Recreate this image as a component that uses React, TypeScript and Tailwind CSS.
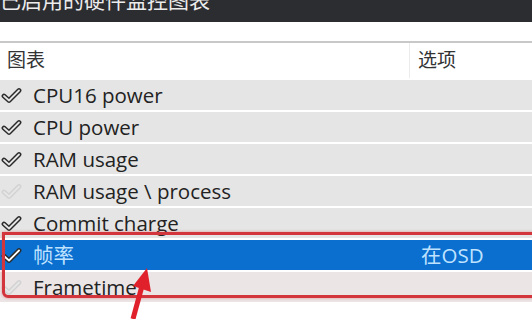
const font = { fontFamily: '"Open Sans", "Noto Sans", "Noto Sans CJK SC", sans-serif' };

type Row = { name: string; option?: string; state: 'on' | 'off'; selected?: boolean };

const rows: Row[] = [
  { name: 'CPU16 power', state: 'on' },
  { name: 'CPU power', state: 'on' },
  { name: 'RAM usage', state: 'on' },
  { name: 'RAM usage \\ process', state: 'off' },
  { name: 'Commit charge', state: 'on' },
  { name: '帧率', option: '在OSD', state: 'on', selected: true },
  { name: 'Frametime', state: 'off' },
];

function Check({ state, selected }: { state: 'on' | 'off'; selected?: boolean }) {
  const outer = state === 'off' ? '#d2d2d2' : '#2a2a2a';
  const inner = selected ? '#ffffff' : state === 'off' ? '#e6e6e6' : '#e4e4e4';
  return (
    <svg width="21" height="17" viewBox="0 0 21 17" className="shrink-0">
      <path d="M3 9 L8 13.5 L18 3.5" fill="none" stroke={outer} strokeWidth="4.8" strokeLinecap="round" strokeLinejoin="round" />
      <path d="M3 9 L8 13.5 L18 3.5" fill="none" stroke={inner} strokeWidth="1.8" strokeLinecap="round" strokeLinejoin="round" />
    </svg>
  );
}

export default function App() {
  return (
    <div className="relative w-[532px] h-[319px] overflow-hidden bg-white" style={font}>
      {/* title bar, cut at top */}
      <div className="h-[22px] bg-[#2c2d31] overflow-hidden">
        <div className="-mt-[12px] text-[21px] leading-[24px] text-[#ececec] whitespace-nowrap">已启用的硬件监控图表</div>
      </div>
      <div className="h-[19px] bg-white" />

      {/* table header */}
      <div className="grid grid-cols-[410px_1fr] h-[37px] border-t-2 border-[#c8c8c8] bg-white text-[19px] text-[#333]">
        <div className="flex items-center pl-[7px] border-r border-[#ececec]">图表</div>
        <div className="flex items-center pl-[8px]">选项</div>
      </div>

      {/* rows */}
      <div className="flex flex-col gap-[2px] bg-white pt-[2px]">
        {rows.map((r, i) => (
          <div
            key={i}
            className={`grid grid-cols-[410px_1fr] h-[30px] text-[20.5px] ${
              r.selected ? 'bg-[#0b6fd0] text-[#bfe3ff]' : i === 6 ? 'bg-[#ebe5e6] text-[#222]' : 'bg-[#e5e5e5] text-[#222]'
            }`}
          >
            <div className="flex items-center gap-[11px] pl-[1px]">
              <Check state={r.state} selected={r.selected} />
              <span className="whitespace-nowrap">{r.name}</span>
            </div>
            <div className="flex items-center pl-[11px]">{r.option}</div>
          </div>
        ))}
      </div>

      {/* red highlight box */}
      <div className="absolute left-[2px] top-[232px] w-[540px] h-[66px] border-[3px] border-[#d3353c] rounded-bl-[6px] shadow-[0_0_3px_rgba(220,60,60,0.5)]" />

      {/* red arrow */}
      <svg className="absolute left-[120px] top-[262px]" width="40" height="57" viewBox="0 0 40 57">
        <path d="M13 57 L22 24" stroke="#e0202a" strokeWidth="5" fill="none" />
        <polygon points="27,6 31,30 13,24" fill="#e0202a" />
      </svg>
    </div>
  );
}
